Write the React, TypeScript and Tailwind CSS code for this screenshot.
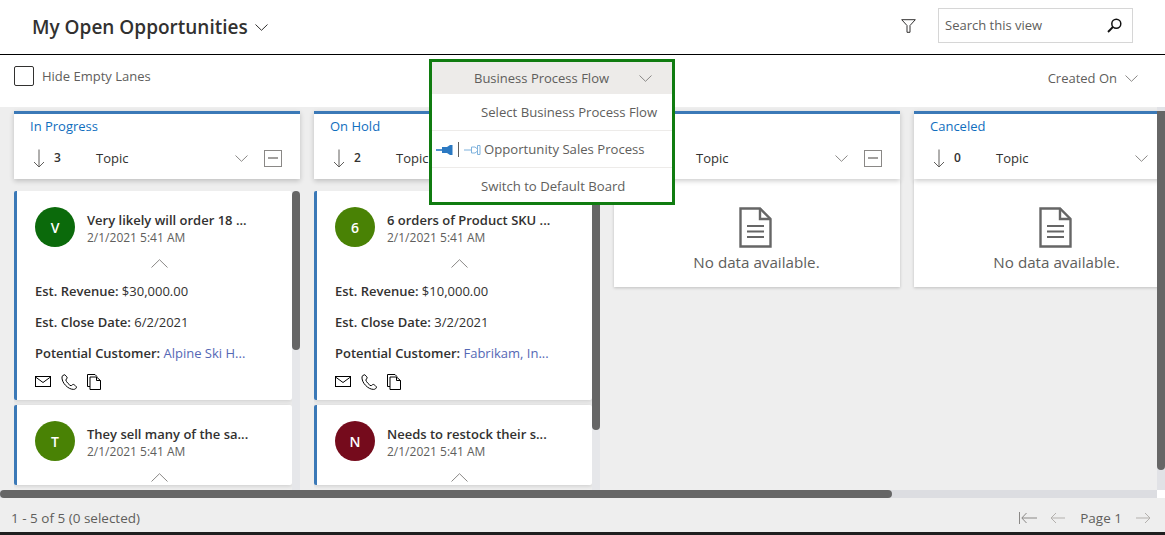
import React from "react";

const font = { fontFamily: '"Open Sans", "Noto Sans", sans-serif' };

function Chevron({ className = "", w = 13, h = 7, up = false, color = "#8a8886" }: { className?: string; w?: number; h?: number; up?: boolean; color?: string }) {
  return (
    <svg width={w} height={h} viewBox={`0 0 ${w} ${h}`} className={className} fill="none">
      <path d={up ? `M0.5 ${h - 0.5} L${w / 2} 0.7 L${w - 0.5} ${h - 0.5}` : `M0.5 0.5 L${w / 2} ${h - 0.7} L${w - 0.5} 0.5`} stroke={color} strokeWidth="1" />
    </svg>
  );
}

function DownArrow() {
  return (
    <svg width="12" height="19" viewBox="0 0 12 19" fill="none">
      <path d="M6 0.5V18M1 13L6 18L11 13" stroke="#605e5c" strokeWidth="1" />
    </svg>
  );
}

function Collapse() {
  return (
    <div className="flex h-[17px] w-[18px] items-center justify-center border border-[#8a8886]">
      <div className="h-[2px] w-[10px] bg-[#a19f9d]" />
    </div>
  );
}

function LaneHeader({ title, count, collapse = true }: { title: string; count: number; collapse?: boolean }) {
  return (
    <div className="relative z-10 h-[68px] w-[286px] shrink-0 border-t-[3px] border-[#3b79b7] bg-white shadow-[0_2px_5px_rgba(0,0,0,0.2)]">
      <div className="h-[22px] pl-[16px] pt-[2px] text-[13px] leading-[20px] text-[#106ebe]">{title}</div>
      <div className="mt-[10px] flex h-[24px] items-center pl-[19px]">
        <DownArrow />
        <span className="ml-[9px] w-[42px] text-[12px] font-semibold text-[#323130]">{count}</span>
        <span className="mt-[2px] w-[139px] text-[13px] text-[#323130]">Topic</span>
        <Chevron className="mt-[1px]" />
        {collapse && <div className="ml-[16px]"><Collapse /></div>}
      </div>
    </div>
  );
}

function MailIcon() {
  return (
    <svg width="16" height="11" viewBox="0 0 16 11" fill="none">
      <rect x="0.5" y="0.5" width="15" height="10" stroke="#000" />
      <path d="M0.5 1L8 6.5L15.5 1" stroke="#000" />
    </svg>
  );
}

function PhoneIcon() {
  return (
    <svg width="16" height="16" viewBox="0 0 16 16" fill="none">
      <path d="M3.2 0.7L1 2.4C0.6 5.8 2.3 9 4.6 11.4C6.9 13.8 9.8 15.4 12.6 15.4C14 15.4 15.3 14.4 15.5 13.2C15.4 12.4 13.6 10.9 12.4 10.4C11.6 10.2 10.8 11.6 10 11.8C8.4 11.2 5.2 7.8 4.8 6C5 5.2 6.2 4.6 6.2 3.8C5.8 2.6 4.2 0.8 3.2 0.7Z" stroke="#000" strokeWidth="1" />
    </svg>
  );
}

function PagesIcon() {
  return (
    <svg width="14" height="16" viewBox="0 0 14 16" fill="none">
      <path d="M3 12.5H0.5V0.5H8L10 2.5" stroke="#000" />
      <path d="M3 3H9.5L13.5 6.5V15.5H3V3Z" stroke="#000" />
      <path d="M9.5 3V6.5H13.5" stroke="#000" />
    </svg>
  );
}

function Card({ letter, color, title, revenue, close, customer, expanded = true }: { letter: string; color: string; title: string; revenue?: string; close?: string; customer?: string; expanded?: boolean }) {
  return (
    <div className="w-[278px] shrink-0 rounded-[2px] border-l-[3px] border-[#3b79b7] bg-white pl-[18px] shadow-[0_1px_4px_rgba(0,0,0,0.15)]">
      <div className="flex items-center pt-[16px]">
        <div className="flex h-[40px] w-[40px] items-center justify-center rounded-full text-[14px] font-semibold text-white" style={{ backgroundColor: color }}>
          {letter}
        </div>
        <div className="ml-[12px] pt-[3px]">
          <div className="mb-[1px] text-[13px] font-semibold leading-[18px] text-[#323130]">{title}</div>
          <div className="text-[12px] leading-[16px] text-[#605e5c]">2/1/2021 5:41 AM</div>
        </div>
      </div>
      <div className="flex h-[24px] items-center pl-[116px] pt-[9px]">
        <Chevron up w={17} h={9} />
      </div>
      {expanded && (
        <div className="text-[13px] text-[#323130]">
          <div className="mt-[8px] h-[31px] leading-[24px]"><span className="font-semibold">Est. Revenue:</span> {revenue}</div>
          <div className="h-[31px] leading-[24px]"><span className="font-semibold">Est. Close Date:</span> {close}</div>
          <div className="h-[31px] leading-[24px]"><span className="font-semibold">Potential Customer:</span> <span className="text-[#5568b5]">{customer}</span></div>
          <div className="flex h-[28px] items-center gap-[10px] pb-[9px]">
            <MailIcon />
            <PhoneIcon />
            <PagesIcon />
          </div>
        </div>
      )}
    </div>
  );
}

function CardLane({ title, count, thumb, first, second }: { title: string; count: number; thumb: number; first: React.ReactNode; second: React.ReactNode }) {
  return (
    <div className="flex w-[286px] shrink-0 flex-col">
      <LaneHeader title={title} count={count} />
      <div className="mt-[12px] flex h-[299px] overflow-hidden">
        <div className="flex w-[278px] flex-col gap-[5px]">
          {first}
          {second}
        </div>
        <div className="h-full w-[8px] bg-[#e6e7ea]">
          <div className="w-[8px] rounded-b-full rounded-t-full bg-[#666666]" style={{ height: thumb }} />
        </div>
      </div>
    </div>
  );
}

function DocIcon() {
  return (
    <svg width="33" height="41" viewBox="0 0 33 41" fill="none" className="mr-[3px]">
      <path d="M1.5 1.5H21L31.5 12V39.5H1.5V1.5Z" stroke="#666" strokeWidth="2.4" />
      <path d="M21 1.5V12H31.5" stroke="#666" strokeWidth="2.4" />
      <path d="M8 19H25M8 24.5H25M8 30H25" stroke="#666" strokeWidth="2.2" />
    </svg>
  );
}

function EmptyLane({ title, count, collapse }: { title: string; count: number; collapse?: boolean }) {
  return (
    <div className="w-[286px] shrink-0">
      <LaneHeader title={title} count={count} collapse={collapse} />
      <div className="flex h-[108px] flex-col items-center bg-white pt-[28px] shadow-[0_1px_3px_rgba(0,0,0,0.2)]">
        <DocIcon />
        <div className="mr-[1px] mt-[4px] text-[15.2px] leading-[20px] text-[#605e5c]">No data available.</div>
      </div>
    </div>
  );
}

function PinIcon({ active }: { active: boolean }) {
  return (
    <svg width="17" height="12" viewBox="0 0 17 12" fill="none">
      {active ? (
        <>
          <path d="M0 6H7" stroke="#2b79c2" strokeWidth="1.6" />
          <path d="M6 3H11L14 1H16.5V11H14L11 9H6V3Z" fill="#2b79c2" />
        </>
      ) : (
        <path d="M0 6H7M7.5 3H11L13.5 5M7.5 9V3M7.5 9H11L13.5 7M13.5 1.5H16V10.5H13.5V1.5Z" stroke="#7fb2dd" />
      )}
    </svg>
  );
}

export default function App() {
  return (
    <div className="relative flex h-[535px] w-[1165px] flex-col overflow-hidden bg-white" style={font}>
      {/* Header */}
      <header className="flex h-[55px] shrink-0 items-center border-b border-black">
        <div className="ml-[32px] text-[19px] font-semibold leading-[26px] text-[#323130]">My Open Opportunities</div>
        <Chevron className="ml-[7px] mt-[1px]" w={13} h={7} color="#323130" />
        <div className="ml-auto mr-[32px] flex h-full items-start pt-[8px]">
          <svg width="15" height="14" viewBox="0 0 15 14" fill="none" className="mr-[22px] mt-[11px]">
            <path d="M0.7 0.7H14.3L9 6.5V13.3H6V6.5L0.7 0.7Z" stroke="#323130" />
          </svg>
          <div className="flex h-[35px] w-[195px] items-center justify-between border border-[#d6d6d6] pl-[6px] pr-[10px]">
            <span className="text-[13px] text-[#605e5c]">Search this view</span>
            <svg width="15" height="15" viewBox="0 0 15 15" fill="none">
              <circle cx="9.3" cy="5.7" r="4.5" stroke="#111" strokeWidth="1.5" />
              <path d="M5.9 9L1 14" stroke="#111" strokeWidth="1.8" />
            </svg>
          </div>
        </div>
      </header>

      {/* Toolbar */}
      <div className="flex h-[52px] shrink-0 items-start">
        <div className="ml-[14px] mt-[11px] h-[20px] w-[20px] rounded-[2px] border border-[#323130]" />
        <span className="ml-[8px] mt-[11px] text-[13px] leading-[20px] text-[#605e5c]">Hide Empty Lanes</span>
        <div className="ml-auto mr-[27px] mt-[13px] flex items-center gap-[8px]">
          <span className="text-[13px] leading-[20px] text-[#605e5c]">Created On</span>
          <Chevron w={13} h={7} />
        </div>
      </div>

      {/* Board */}
      <div className="flex h-[391px] shrink-0 flex-col bg-[#eeeeee]">
        <div className="flex h-[383px] shrink-0">
          <div className="flex min-w-0 flex-1 gap-[14px] overflow-hidden pl-[14px] pt-[4px]">
            <CardLane
              title="In Progress"
              count={3}
              thumb={159}
              first={<Card letter="V" color="#0b6a0b" title="Very likely will order 18 ..." revenue="$30,000.00" close="6/2/2021" customer="Alpine Ski H..." />}
              second={<Card letter="T" color="#498205" title="They sell many of the sa..." expanded={false} />}
            />
            <CardLane
              title="On Hold"
              count={2}
              thumb={239}
              first={<Card letter="6" color="#498205" title="6 orders of Product SKU ..." revenue="$10,000.00" close="3/2/2021" customer="Fabrikam, In..." />}
              second={<Card letter="N" color="#750b1c" title="Needs to restock their s..." expanded={false} />}
            />
            <EmptyLane title="" count={0} />
            <EmptyLane title="Canceled" count={0} collapse={false} />
          </div>
          <div className="w-[8px] shrink-0 bg-[#e1e2e6] pt-[4px]">
            <div className="h-[359px] w-[8px] rounded-b-full bg-[#666666]" />
          </div>
        </div>
        <div className="flex h-[8px] shrink-0">
          <div className="h-[8px] w-[1157px] bg-[#dcdde1]">
            <div className="h-[8px] w-[892px] rounded-full bg-[#666666]" />
          </div>
          <div className="h-[8px] w-[8px] bg-white" />
        </div>
      </div>

      {/* Footer */}
      <footer className="flex h-[34px] shrink-0 items-center bg-[#eeeeee] pl-[11px] pr-[14px] pt-[6px]">
        <span className="text-[13.5px] text-[#605e5c]">1 - 5 of 5 (0 selected)</span>
        <div className="ml-auto flex items-center">
          <svg width="18" height="12" viewBox="0 0 18 12" fill="none" className="mr-[-1px]">
            <path d="M0.5 0V12M18 6H3M7.5 1L2.8 6L7.5 11" stroke="#8a8886" />
          </svg>
          <svg width="15" height="12" viewBox="0 0 15 12" fill="none" className="ml-[14px]">
            <path d="M15 6H1M6 1L1 6L6 11" stroke="#b3b0ad" />
          </svg>
          <span className="ml-[15px] text-[13.5px] text-[#605e5c]">Page 1</span>
          <svg width="15" height="12" viewBox="0 0 15 12" fill="none" className="ml-[14px]">
            <path d="M0 6H14M9 1L14 6L9 11" stroke="#b3b0ad" />
          </svg>
        </div>
      </footer>
      <div className="h-[3px] shrink-0 bg-[#1f1f1f]" />

      {/* Dropdown overlay */}
      <div className="absolute left-[429px] top-[59px] z-20 w-[246px] border-[3px] border-[#107c10] bg-white text-[13.15px] text-[#605e5c]">
        <div className="flex h-[32px] items-center bg-[#edebe9] text-[13px]">
          <span className="ml-[42px] leading-[20px]">Business Process Flow</span>
          <Chevron className="ml-[30px]" w={13} h={7} />
        </div>
        <div className="flex h-[37px] items-center border-b border-[#edebe9] pl-[49px] pt-[1px]">Select Business Process Flow</div>
        <div className="flex h-[37px] items-center border-b border-[#edebe9] pl-[4px] pt-[1px]">
          <PinIcon active />
          <span className="mx-[5px] h-[15px] w-px bg-[#605e5c]" />
          <PinIcon active={false} />
          <span className="ml-[3px]">Opportunity Sales Process</span>
        </div>
        <div className="flex h-[34px] items-center pl-[49px] pt-[3px]">Switch to Default Board</div>
      </div>
    </div>
  );
}
